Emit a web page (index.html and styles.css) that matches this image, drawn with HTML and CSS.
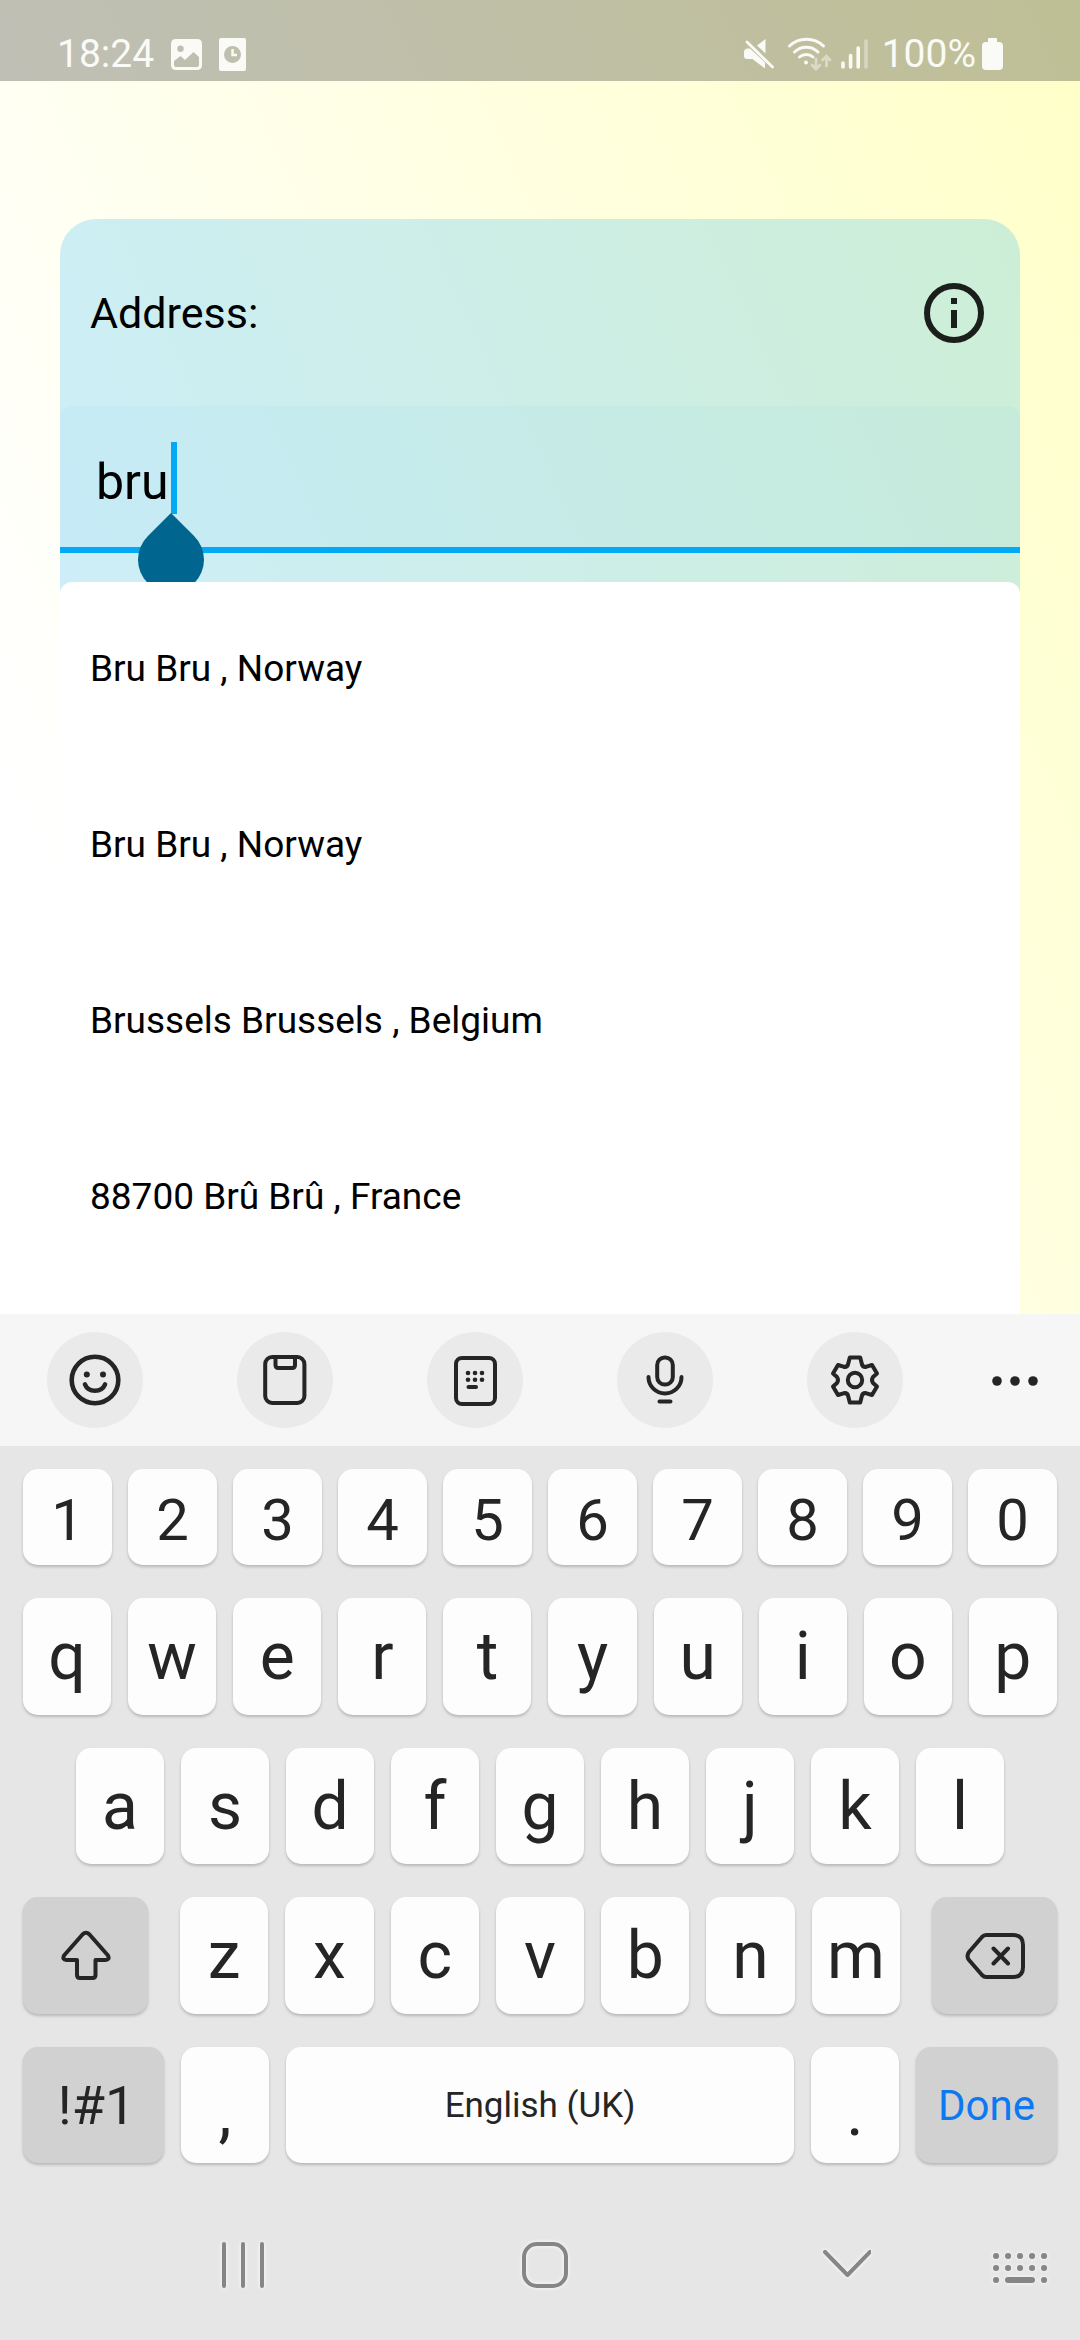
FILE: index.html
```html
<!DOCTYPE html>
<html lang="en">
<head>
<meta charset="utf-8">
<meta name="viewport" content="width=device-width">
<title>Address</title>
<link rel="stylesheet" href="styles.css">
</head>
<body>
<header class="status">
  <div class="status-left">
    <span>18:24</span>
    <svg width="31" height="31" viewBox="0 0 31 31"><path fill="currentColor" fill-rule="evenodd" d="M5 0H26Q31 0 31 5V26Q31 31 26 31H5Q0 31 0 26V5Q0 0 5 0ZM9.500 6.500A3.200 3.200 0 1 0 9.500 12.900A3.200 3.200 0 1 0 9.500 6.500ZM3 22V26Q3 28 5 28H26Q28 28 28 26V18L22.500 13L14 21L9.500 17Z"/></svg>
    <svg width="27" height="33" viewBox="0 0 27 33"><path fill="currentColor" fill-rule="evenodd" d="M2 0H25Q27 0 27 2V31Q27 33 25 33H2Q0 33 0 31V2Q0 0 2 0ZM13.500 8A8.500 8.500 0 1 0 13.500 25A8.500 8.500 0 1 0 13.500 8Z"/><path fill="none" stroke="currentColor" stroke-width="2.500" d="M13.500 11V17H18"/></svg>
  </div>
  <div class="status-right">
    <svg width="32" height="30" viewBox="0 0 32 30"><path fill="currentColor" d="M4 9.500H6L21 23.500V29.500L8.500 20H3Q0 20 0 17V13Q0 9.500 4 9.500ZM21.500 0V14.500L13 6.500Z"/><path stroke="currentColor" stroke-width="2.800" stroke-linecap="round" d="M3 3L28.500 28"/></svg>
    <svg width="41" height="34" viewBox="0 0 41 34" overflow="visible" fill="none" stroke="currentColor" stroke-linecap="round"><g stroke-width="3"><path d="M1.500 9A24.700 24.700 0 0 1 35.500 9M6.500 15A17 17 0 0 1 30 15M11.500 20A10 10 0 0 1 25 20"/></g><circle cx="18" cy="25.500" r="2" fill="currentColor" stroke="none"/><path opacity=".45" stroke-width="2.800" d="M28 22V31M24 28L28 32L32 28M38.500 29V20M34.500 23L38.500 19L42 23"/></svg>
    <svg width="29" height="30" viewBox="0 0 29 30" stroke="currentColor" stroke-width="3.600" stroke-linecap="round"><path d="M2 24V28M9.600 16.500V28M17.200 9V28"/><path opacity=".4" d="M25 2V28"/></svg>
    <div class="battery"><span>100%</span>
    <svg width="21" height="32" viewBox="0 0 21 32"><path fill="currentColor" d="M6 1Q6 0 7 0H14Q15 0 15 1V4H17Q21 4 21 8V28Q21 32 17 32H4Q0 32 0 28V8Q0 4 4 4H6Z"/></svg></div>
  </div>
</header>

<main class="page">
  <section class="card">
    <div class="card-head">
      <label for="address">Address:</label>
      <button class="info" aria-label="Information"><svg width="60" height="60" viewBox="0 0 60 60"><circle cx="30" cy="30" r="27" fill="none" stroke="currentColor" stroke-width="6"/><path fill="currentColor" d="M27 15h6v6h-6zM27 27h6v18h-6z"/></svg></button>
    </div>
    <div class="field">
      <input id="address" type="text" value="bru" autocomplete="off">
      <span class="caret"></span>
      <svg class="handle" width="66" height="80" viewBox="0 0 66 80"><path fill="#00658f" d="M33 0L56.300 23.300A33 33 0 1 1 9.700 23.300Z"/></svg>
    </div>
    <ul class="results">
      <li>Bru Bru , Norway</li>
      <li>Bru Bru , Norway</li>
      <li>Brussels Brussels , Belgium</li>
      <li>88700 Brû Brû , France</li>
    </ul>
  </section>
</main>

<section class="keyboard" aria-label="Keyboard">
  <div class="tools">
    <button class="tool" aria-label="Emoji"><svg width="52" height="52" viewBox="0 0 52 52"><circle cx="26" cy="26" r="23.300" stroke-width="4.600"/><path stroke-width="4.600" d="M16 30.500Q18.500 36.700 26 36.700T36 30.500"/><g fill="currentColor" stroke="none"><circle cx="17.800" cy="20.500" r="3"/><circle cx="34" cy="20.500" r="3"/></g></svg></button>
    <button class="tool" aria-label="Clipboard"><svg width="52" height="52" viewBox="0 0 52 52"><rect x="6.200" y="3" width="39.200" height="46" rx="7"/><path d="M16.500 3V11Q16.500 14 19.500 14H33Q36 14 36 11V3"/></svg></button>
    <button class="tool" aria-label="Keyboard modes"><svg width="52" height="52" viewBox="0 0 52 52"><rect x="7" y="4" width="39" height="46" rx="6"/><path d="M19.500 33H27"/><g fill="currentColor" stroke="none"><circle cx="19" cy="19" r="2.300"/><circle cx="26" cy="19" r="2.300"/><circle cx="33" cy="19" r="2.300"/><circle cx="19" cy="25.800" r="2.300"/><circle cx="26" cy="25.800" r="2.300"/><circle cx="33" cy="25.800" r="2.300"/></g></svg></button>
    <button class="tool" aria-label="Voice input"><svg width="52" height="52" viewBox="0 0 52 52"><rect x="18.200" y="3.400" width="15.600" height="27.200" rx="7.500"/><path d="M9.500 23A16.500 16.500 0 0 0 42.500 23M20.500 47.500H31.500"/></svg></button>
    <button class="tool" aria-label="Settings"><svg width="52" height="52" viewBox="0 0 52 52"><path d="M20.800 3.500H31.200L33 10.500Q34 13.500 37.500 12.700L43 11L48 19.500L44 23Q42 26 44 29L48 32.500L43 41L37.500 39.300Q34 38.500 33 41.500L31.200 48.500H20.800L19 41.500Q18 38.500 14.500 39.300L9 41L4 32.500L8 29Q10 26 8 23L4 19.500L9 11L14.500 12.700Q18 13.500 19 10.500Z"/><circle cx="26" cy="26" r="7.200"/></svg></button>
    <button class="tool more" aria-label="More"><svg width="52" height="52" viewBox="0 0 52 52"><g fill="currentColor" stroke="none"><circle cx="8" cy="27" r="4.800"/><circle cx="26" cy="27" r="4.800"/><circle cx="44" cy="27" r="4.800"/></g></svg></button>
  </div>

  <div class="keys">
    <div class="row digits"><button>1</button><button>2</button><button>3</button><button>4</button><button>5</button><button>6</button><button>7</button><button>8</button><button>9</button><button>0</button></div>
    <div class="row"><button>q</button><button>w</button><button>e</button><button>r</button><button>t</button><button>y</button><button>u</button><button>i</button><button>o</button><button>p</button></div>
    <div class="row home"><button>a</button><button>s</button><button>d</button><button>f</button><button>g</button><button>h</button><button>j</button><button>k</button><button>l</button></div>
    <div class="row lower">
      <button class="dark side" aria-label="Shift"><svg width="52" height="52" viewBox="0 0 52 52"><path d="M22.500 4.500Q26 1 29.500 4.500L48 25.500Q50 30 45.500 30H35.500V45Q35.500 48 32.500 48H20Q17 48 17 45V30H6.500Q2 30 4 25.500Z"/></svg></button>
      <div class="letters"><button>z</button><button>x</button><button>c</button><button>v</button><button>b</button><button>n</button><button>m</button></div>
      <button class="dark side" aria-label="Backspace"><svg width="60" height="46" viewBox="0 0 60 46"><path d="M21 2H48Q58 2 58 12V34Q58 44 48 44H21Q19 44 17 42L4 27Q1 23 4 19L17 4Q19 2 21 2ZM28.500 15.500L43 30.500M43 15.500L28.500 30.500"/></svg></button>
    </div>
    <div class="row bottom"><button class="dark wide symbols">!#1</button><button class="point">,</button><button class="space">English (UK)</button><button class="point">.</button><button class="dark wide done">Done</button></div>
  </div>

  <nav class="nav">
    <div class="nav-main">
      <button aria-label="Recent apps"><svg width="46" height="48" viewBox="0 0 46 48"><path d="M4 3V45M23 3V45M42 3V45"/></svg></button>
      <button aria-label="Home"><svg width="46" height="48" viewBox="0 0 46 48"><rect x="2" y="3" width="42" height="42" rx="13"/></svg></button>
      <button aria-label="Hide keyboard"><svg width="48" height="48" viewBox="0 0 48 48"><path d="M2 11L24.500 34L47 11"/></svg></button>
    </div>
    <button aria-label="Change keyboard"><svg width="58" height="48" viewBox="0 0 58 48"><path stroke-width="6" d="M5 15h.1M17 15h.1M29 15h.1M41 15h.1M53 15h.1M5 27h.1M17 27h.1M29 27h.1M41 27h.1M53 27h.1M5 39h.1M17 39H41M53 39h.1"/></svg></button>
  </nav>
</section>
</body>
</html>
```
FILE: styles.css
```css
* {
  box-sizing: border-box;
}

body {
  margin: 0;
  min-height: 100vh;
  display: flex;
  flex-direction: column;
  font-family: Roboto, sans-serif;
  color: #000;
  background: linear-gradient(to top right, #fff 34%, #ffffc8);
}

svg {
  display: block;
  flex: none;
}

button {
  display: flex;
  align-items: center;
  justify-content: center;
  padding: 0;
  border: 0;
  background: none;
  color: inherit;
  font: inherit;
}

/* Status bar */
.status {
  display: flex;
  justify-content: space-between;
  padding: 27px 77px 0 57px;
  background: rgba(0, 0, 0, 0.25);
  color: #fafaf7;
  font-size: 39px;
  line-height: 54px;
}

.status-left,
.status-right,
.battery {
  display: flex;
  align-items: center;
}

.status-left {
  gap: 17px;
}

.status-right {
  gap: 12px;
}

.battery {
  gap: 6px;
}

/* Address card */
.page {
  flex: 1;
  display: flex;
  padding: 138px 60px 0;
}

.card {
  flex: 1;
  display: flex;
  flex-direction: column;
  border-radius: 36px 36px 0 0;
  background: rgba(3, 169, 244, 0.2);
}

.card-head {
  display: flex;
  align-items: center;
  justify-content: space-between;
  padding: 64px 36px 63px 30px;
  font-size: 43px;
  line-height: 60px;
}

.info {
  color: #1b1f1b;
}

.field {
  position: relative;
}

.field input {
  display: block;
  width: 100%;
  height: 147px;
  padding: 41px 36px 31px;
  border: 0;
  border-bottom: 6px solid #03a9f4;
  border-radius: 12px 12px 0 0;
  outline: 0;
  background: rgba(3, 169, 244, 0.03);
  color: inherit;
  font: 50px/69px Roboto, sans-serif;
}

.caret {
  position: absolute;
  left: 111px;
  top: 36px;
  width: 6px;
  height: 72px;
  background: #03a9f4;
}

.handle {
  position: absolute;
  left: 78px;
  top: 107px;
}

.results {
  position: relative;
  flex: 1;
  margin: 29px 0 0;
  padding: 0 30px 28px;
  border-radius: 12px 12px 0 0;
  background: #fff;
  list-style: none;
  font-size: 37px;
  line-height: 48px;
}

.results li {
  padding: 63px 0 65px;
}

/* Keyboard */
.keyboard {
  background: #e6e6e6;
  color: #252525;
}

.keyboard svg {
  fill: none;
  stroke: currentColor;
  stroke-width: 4;
  stroke-linecap: round;
  stroke-linejoin: round;
}

.tools {
  display: flex;
  justify-content: space-between;
  padding: 18px 17px 18px 47px;
  background: #f6f6f6;
}

.tool {
  width: 96px;
  height: 96px;
  border-radius: 50%;
  background: #eaeaea;
}

.more {
  margin-left: -30px;
  background: none;
}

.keys {
  display: flex;
  flex-direction: column;
  gap: 33px;
  padding: 23px 23px 27px;
}

.row,
.letters {
  display: flex;
  gap: 17px;
}

.row button {
  flex: 1 1 0;
  height: 117px;
  border-radius: 15px;
  background: #fdfdfd;
  box-shadow: 0 2px 3px rgba(0, 0, 0, 0.2);
  font-size: 66px;
}

.row .dark {
  background: #d1d1d1;
}

.row.digits {
  gap: 16px;
}

.row.digits button {
  height: 96px;
  padding-top: 6px;
  font-size: 58px;
}

.row.home {
  padding: 0 53px;
}

.row.home button,
.row.bottom button {
  height: 116px;
}

.row.lower {
  gap: 32px;
}

.row .side {
  flex-grow: 125;
}

.letters {
  flex: 720 1 0;
}

.row.bottom .wide {
  flex-grow: 141;
  font-size: 54px;
}

.row.bottom .symbols {
  text-indent: 6px;
}

.row.bottom .point {
  flex-grow: 88;
  padding-top: 14px;
}

.row.bottom .space {
  flex-grow: 508;
  font-size: 35px;
}

.row.bottom .done {
  color: #0c79f3;
  font-size: 42px;
}

/* System navigation */
.nav {
  display: flex;
  gap: 120px;
  padding: 51px 31px 51px 220px;
  color: #868686;
}

.nav-main {
  flex: 1;
  display: flex;
  justify-content: space-between;
}

.nav svg {
  filter: drop-shadow(0 0 2px #fff);
}
```
